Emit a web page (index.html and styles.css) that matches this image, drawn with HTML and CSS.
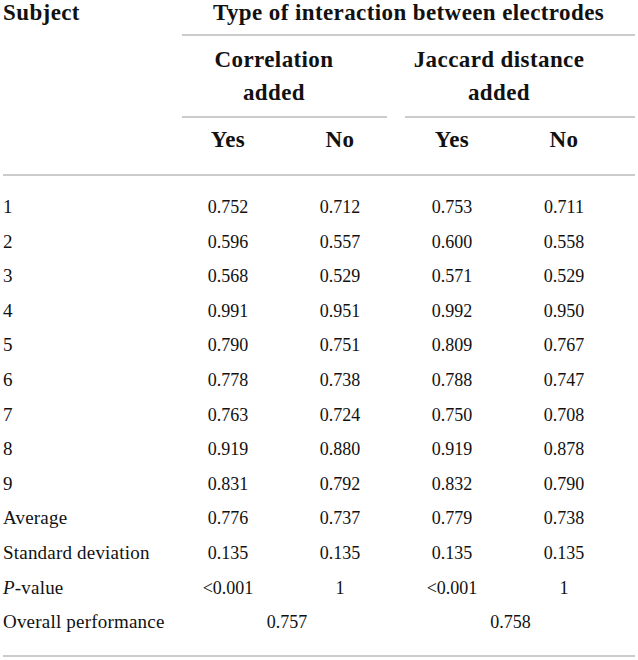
FILE: index.html
```html
<!DOCTYPE html>
<html lang="en">
<head>
<meta charset="utf-8">
<title>Type of interaction between electrodes</title>
<link rel="stylesheet" href="styles.css">
</head>
<body>
<table class="results">
  <colgroup>
    <col class="col-label">
    <col class="col-data">
    <col class="col-data">
    <col class="col-data">
    <col class="col-last">
  </colgroup>
  <thead>
    <tr>
      <th class="subject" rowspan="3">Subject</th>
      <th class="group-head" colspan="4"><div class="rule rule-type">Type of interaction between electrodes</div></th>
    </tr>
    <tr>
      <th class="group-head" colspan="2"><div class="rule rule-corr">Correlation<br>added</div></th>
      <th class="group-head" colspan="2"><div class="rule rule-jac">Jaccard distance<br>added</div></th>
    </tr>
    <tr>
      <th class="yn">Yes</th>
      <th class="yn">No</th>
      <th class="yn">Yes</th>
      <th class="yn last">No</th>
    </tr>
  </thead>
  <tbody>
    <tr><td class="label">1</td><td>0.752</td><td>0.712</td><td>0.753</td><td class="last">0.711</td></tr>
    <tr><td class="label">2</td><td>0.596</td><td>0.557</td><td>0.600</td><td class="last">0.558</td></tr>
    <tr><td class="label">3</td><td>0.568</td><td>0.529</td><td>0.571</td><td class="last">0.529</td></tr>
    <tr><td class="label">4</td><td>0.991</td><td>0.951</td><td>0.992</td><td class="last">0.950</td></tr>
    <tr><td class="label">5</td><td>0.790</td><td>0.751</td><td>0.809</td><td class="last">0.767</td></tr>
    <tr><td class="label">6</td><td>0.778</td><td>0.738</td><td>0.788</td><td class="last">0.747</td></tr>
    <tr><td class="label">7</td><td>0.763</td><td>0.724</td><td>0.750</td><td class="last">0.708</td></tr>
    <tr><td class="label">8</td><td>0.919</td><td>0.880</td><td>0.919</td><td class="last">0.878</td></tr>
    <tr><td class="label">9</td><td>0.831</td><td>0.792</td><td>0.832</td><td class="last">0.790</td></tr>
    <tr><td class="label">Average</td><td>0.776</td><td>0.737</td><td>0.779</td><td class="last">0.738</td></tr>
    <tr><td class="label">Standard deviation</td><td>0.135</td><td>0.135</td><td>0.135</td><td class="last">0.135</td></tr>
    <tr><td class="label"><i>P</i>-value</td><td>&lt;0.001</td><td>1</td><td>&lt;0.001</td><td class="last">1</td></tr>
    <tr><td class="label">Overall performance</td><td class="merged-a" colspan="2">0.757</td><td class="merged-b last" colspan="2">0.758</td></tr>
  </tbody>
</table>
</body>
</html>
```

FILE: styles.css
```css
html, body {
  margin: 0;
  padding: 0;
  background: #ffffff;
}

body {
  padding: 0 0 0 3px;
  color: #111111;
  font-family: "Liberation Serif", "Times New Roman", serif;
}

.results {
  table-layout: fixed;
  width: 632px;
  border-collapse: separate;
  border-spacing: 0;
}

.col-label { width: 169px; }
.col-data { width: 112px; }
.col-last { width: 127px; }

th {
  font-weight: bold;
  font-size: 23px;
  letter-spacing: 0.4px;
  padding: 0;
  text-align: center;
  vertical-align: top;
}

.subject {
  text-align: left;
  line-height: 26px;
  border-bottom: 2px solid #cccccc;
}

.rule {
  border-bottom: 2px solid #cccccc;
}

.rule-type {
  margin-left: 10px;
  line-height: 26px;
  padding-bottom: 8px;
}

.rule-corr {
  margin-left: 10px;
  margin-right: 9px;
  padding: 7px 21px 7px 0;
  line-height: 33px;
}

.rule-jac {
  margin-left: 9px;
  padding: 7px 42px 7px 0;
  line-height: 33px;
}

.yn {
  line-height: 26px;
  padding: 9px 0 21px 0;
  border-bottom: 2px solid #cccccc;
}

.yn.last {
  padding-right: 15px;
}

td {
  font-size: 18px;
  line-height: 24px;
  padding: 5.3px 0;
  text-align: center;
  vertical-align: baseline;
  white-space: nowrap;
}

td.last {
  padding-right: 15px;
}

td.label {
  text-align: left;
  font-size: 19px;
  letter-spacing: 0.2px;
}

tbody tr:first-child td {
  padding-top: 19px;
}

tbody tr:last-child td {
  padding-bottom: 21px;
  border-bottom: 2px solid #cccccc;
}

td.merged-a {
  padding-left: 6px;
}

td.merged-b {
  padding-left: 5px;
}
```
